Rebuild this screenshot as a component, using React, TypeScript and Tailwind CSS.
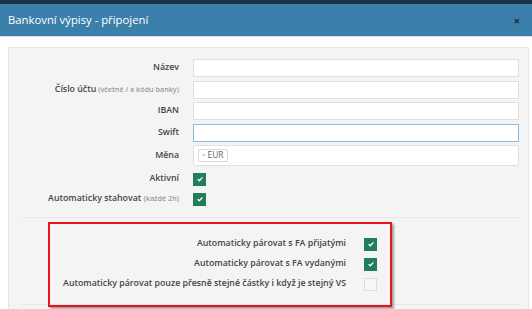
const Check = ({ on = true }: { on?: boolean }) =>
  on ? (
    <span className="flex h-[13px] w-[13px] items-center justify-center bg-[#217d5a]">
      <svg viewBox="0 0 10 10" className="h-[8px] w-[8px]">
        <path d="M2 5.2 L4.2 7.2 L8 3" stroke="#fff" strokeWidth="1.6" fill="none" />
      </svg>
    </span>
  ) : (
    <span className="block h-[13px] w-[13px] border border-[#dcdcdc] bg-[#f7f7f7]" />
  );

const Field = ({ label, hint, focus }: { label: string; hint?: string; focus?: boolean }) => (
  <div className="mb-[3.5px] flex items-center">
    <div className="w-[170px] text-right text-[8.8px] font-semibold text-[#444]">
      {label}
      {hint && <span className="text-[7.2px] font-semibold text-[#999]"> {hint}</span>}
    </div>
    <div
      className={
        "ml-[14px] h-[18px] w-[326px] bg-white border " +
        (focus ? "border-[#8bbbdc]" : "border-[#e0e0e0]")
      }
    />
  </div>
);

const App = () => {
  return (
    <div className="h-[309px] w-[532px] overflow-hidden bg-white font-['Open_Sans',sans-serif]">
      <div className="h-[4px] bg-[#1b3145]" />
      <div className="flex h-[33px] items-center justify-between border-b border-[#d6e4ee] bg-[#3b7fab] pl-2 pr-[12px]">
        <span className="text-[11.3px] text-white">Bankovní výpisy - připojení</span>
        <span className="text-[11px] font-bold leading-none text-[#222]">×</span>
      </div>
      <div className="ml-2 mt-[10px] h-[300px] w-[521px] border border-[#e6e6e6] bg-[#f4f4f4] pt-[11px]">
        <Field label="Název" />
        <Field label="Číslo účtu" hint="(včetně / a kódu banky)" />
        <Field label="IBAN" />
        <Field label="Swift" focus />
        <div className="flex items-center">
          <div className="w-[170px] text-right text-[8.8px] font-semibold text-[#444]">Měna</div>
          <div className="ml-[14px] flex h-[21px] w-[326px] items-center rounded-[2px] border border-[#e0e0e0] bg-white pl-[4px]">
            <span className="flex h-[13px] items-center rounded-[2px] border border-[#d8d8d8] px-[3px] text-[8.5px] text-[#666]">
              <span className="mr-[2px] text-[6px] text-[#999]">×</span>EUR
            </span>
          </div>
        </div>
        <div className="mt-[6px] flex h-[14px] items-center">
          <div className="w-[170px] text-right text-[8.8px] font-semibold text-[#444]">Aktivní</div>
          <div className="ml-[14px]">
            <Check />
          </div>
        </div>
        <div className="mt-[6px] flex h-[14px] items-center">
          <div className="w-[170px] text-right text-[8.8px] font-semibold text-[#444]">
            Automaticky stahovat <span className="text-[7.2px] text-[#999]">(každé 2h)</span>
          </div>
          <div className="ml-[14px]">
            <Check />
          </div>
        </div>
        <div className="ml-[12px] mt-[11px] w-[498px] border-t border-[#e9e9e9]" />
        <div className="relative z-10 ml-[39px] mt-[4px] w-[344px] border-2 border-[#e8141b] pb-[11px] pt-[10px] shadow-[2px_2px_2px_rgba(0,0,0,0.35)]">
          {[
            ["Automaticky párovat s FA přijatými", true],
            ["Automaticky párovat s FA vydanými", true],
            ["Automaticky párovat pouze přesně stejné částky i když je stejný VS", false],
          ].map(([t, on], i) => (
            <div key={i} className="flex h-[20px] items-center">
              <div className="w-[296px] text-right text-[8.8px] font-semibold text-[#444]">{t as string}</div>
              <div className="ml-[18px]">
                <Check on={on as boolean} />
              </div>
            </div>
          ))}
        </div>
        <div className="-mt-[3px] ml-[12px] w-[498px] border-t border-[#e9e9e9]" />
      </div>
    </div>
  );
};

export default App;
